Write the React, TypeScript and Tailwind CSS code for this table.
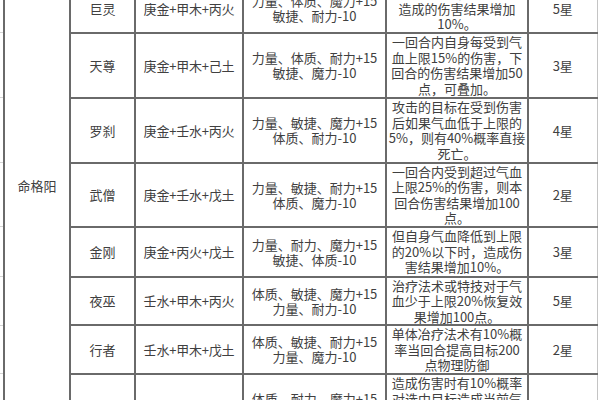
type Row = {
  name: string;
  combo: string;
  attr: string[];
  desc: string[];
  star: string;
  h: string;
};

const rows: Row[] = [
  {
    name: '巨灵',
    combo: '庚金+甲木+丙火',
    attr: ['力量、体质、魔力+15', '敏捷、耐力-10'],
    desc: ['受到致命伤害时本回合', '造成的伤害结果增加', '10%。'],
    star: '5星',
    h: 'h-[47px]',
  },
  {
    name: '天尊',
    combo: '庚金+甲木+己土',
    attr: ['力量、体质、耐力+15', '敏捷、魔力-10'],
    desc: ['一回合内自身每受到气', '血上限15%的伤害，下', '回合的伤害结果增加50', '点，可叠加。'],
    star: '3星',
    h: 'h-[65px]',
  },
  {
    name: '罗刹',
    combo: '庚金+壬水+丙火',
    attr: ['力量、敏捷、魔力+15', '体质、耐力-10'],
    desc: ['攻击的目标在受到伤害', '后如果气血低于上限的', '5%，则有40%概率直接', '死亡。'],
    star: '4星',
    h: 'h-[65px]',
  },
  {
    name: '武僧',
    combo: '庚金+壬水+戊土',
    attr: ['力量、敏捷、耐力+15', '体质、魔力-10'],
    desc: ['一回合内受到超过气血', '上限25%的伤害，则本', '回合伤害结果增加100', '点。'],
    star: '2星',
    h: 'h-[64px]',
  },
  {
    name: '金刚',
    combo: '庚金+丙火+戊土',
    attr: ['力量、耐力、魔力+15', '敏捷、体质-10'],
    desc: ['但自身气血降低到上限', '的20%以下时，造成伤', '害结果增加10%。'],
    star: '3星',
    h: 'h-[50px]',
  },
  {
    name: '夜巫',
    combo: '壬水+甲木+丙火',
    attr: ['体质、敏捷、魔力+15', '力量、耐力-10'],
    desc: ['治疗法术或特技对于气', '血少于上限20%恢复效', '果增加100点。'],
    star: '5星',
    h: 'h-[48px]',
  },
  {
    name: '行者',
    combo: '壬水+甲木+戊土',
    attr: ['体质、敏捷、耐力+15', '力量、魔力-10'],
    desc: ['单体冶疗法术有10%概', '率当回合提高目标200', '点物理防御'],
    star: '2星',
    h: 'h-[48px]',
  },
  {
    name: '魔将',
    combo: '丙火+甲木+己土',
    attr: ['体质、耐力、魔力+15', '力量、敏捷-10'],
    desc: ['造成伤害时有10%概率', '对选中目标造成当前气', '血5%的额外伤害', '。'],
    star: '5星',
    h: 'h-[65px]',
  },
];

const cell = 'border-2 border-[#6a6a6a] text-center align-middle p-0';

export default function App() {
  return (
    <div
      className="w-[600px] h-[400px] overflow-hidden bg-white text-[#404040] text-[13px] leading-[15px]"
      style={{ fontFamily: '"Noto Sans CJK SC", "Liberation Sans", sans-serif' }}
    >
      <table className="-mt-[17px] w-[597px] table-fixed border-collapse">
        <colgroup>
          <col className="w-[4px]" />
          <col className="w-[66px]" />
          <col className="w-[65px]" />
          <col className="w-[108px]" />
          <col className="w-[143px]" />
          <col className="w-[142px]" />
          <col className="w-[69px]" />
        </colgroup>
        <tbody>
          {rows.map((r, i) => (
            <tr key={r.name} className={r.h}>
              <td className="border-y border-[#d4d4d4] p-0" />
              {i === 0 && (
                <td rowSpan={rows.length} className={`${cell} align-top pt-[193px]`}>
                  命格阳
                </td>
              )}
              <td className={cell}>{r.name}</td>
              <td className={`${cell} tracking-[-0.2px]`}>{r.combo}</td>
              <td className={cell}>
                {r.attr.map((a) => (
                  <div key={a}>{a}</div>
                ))}
              </td>
              <td className={cell}>
                {r.desc.map((d) => (
                  <div key={d} className="whitespace-nowrap leading-[15.5px]">
                    {d}
                  </div>
                ))}
              </td>
              <td className={`${cell} border-r border-r-[#c4c4c4]`}>{r.star}</td>
            </tr>
          ))}
        </tbody>
      </table>
    </div>
  );
}
